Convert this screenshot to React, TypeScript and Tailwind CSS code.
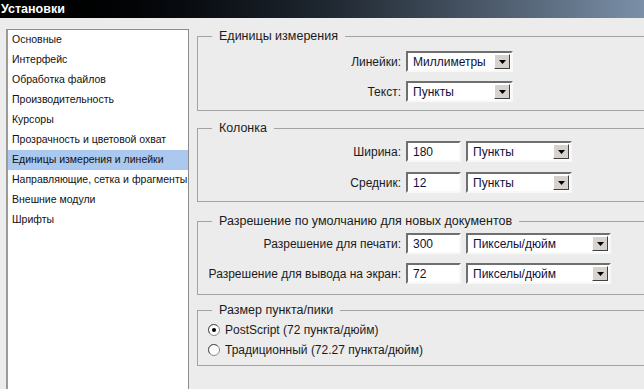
import React from 'react'

const sections = [
  'Основные',
  'Интерфейс',
  'Обработка файлов',
  'Производительность',
  'Курсоры',
  'Прозрачность и цветовой охват',
  'Единицы измерения и линейки',
  'Направляющие, сетка и фрагменты',
  'Внешние модули',
  'Шрифты',
]

const font = { fontFamily: '"Liberation Sans", Arial, sans-serif' }

function Arrow() {
  return (
    <div className="w-[16px] h-[15px] bg-[#d6d3ce] border border-t-white border-l-white border-b-[#404040] border-r-[#404040] flex items-center justify-center">
      <svg width="7" height="4" viewBox="0 0 7 4">
        <path d="M0 0h7L3.5 4z" fill="#000" />
      </svg>
    </div>
  )
}

function Select({ value, width }: { value: string; width: string }) {
  return (
    <div
      className={`${width} h-[21px] bg-white border-2 border-t-[#6f6f6f] border-l-[#6f6f6f] border-b-[#f8f8f8] border-r-[#f8f8f8] flex items-center justify-between pl-[5px] pr-[1px]`}
    >
      <span className="text-[12px] text-[#10103a] leading-none">{value}</span>
      <Arrow />
    </div>
  )
}

function Input({ value }: { value: string }) {
  return (
    <div className="w-[55px] h-[21px] bg-white border-2 border-t-[#6f6f6f] border-l-[#6f6f6f] border-b-[#f8f8f8] border-r-[#f8f8f8] flex items-center pl-[5px]">
      <span className="text-[12px] text-[#10103a] leading-none">{value}</span>
    </div>
  )
}

function Label({ children }: { children: React.ReactNode }) {
  return <div className="w-[204px] text-right text-[12px] text-[#1b1b1b] pr-[1px]">{children}</div>
}

function Group({
  title,
  className,
  children,
}: {
  title: string
  className: string
  children: React.ReactNode
}) {
  return (
    <fieldset className={`w-[470px] border border-[#a3a3a3] ${className}`}>
      <legend className="ml-[14px] px-[7px] text-[12.5px] leading-[14px] text-[#1b1b1b]">{title}</legend>
      {children}
    </fieldset>
  )
}

function Radio({ checked, label }: { checked?: boolean; label: string }) {
  return (
    <div className="flex items-center h-[16px] pl-[10px] gap-[5px]">
      <svg width="12" height="12" viewBox="0 0 12 12">
        <circle cx="6" cy="6" r="5.5" fill="#fff" stroke="#8a8a8a" />
        <path d="M2 9.5A5 5 0 0 1 9.5 2" stroke="#5a5a5a" fill="none" />
        {checked && <circle cx="6" cy="6" r="2" fill="#000" />}
      </svg>
      <span className="text-[12px] text-[#1b1b1b]">{label}</span>
    </div>
  )
}

export default function App() {
  const active = 'Единицы измерения и линейки'

  return (
    <div className="w-[644px] h-[389px] bg-[#ececec] overflow-hidden flex flex-col" style={font}>
      {/* Title bar */}
      <div className="h-[18px] shrink-0 bg-gradient-to-r from-black via-[#1e262f] to-[#7b90a8] flex items-center pl-[1px]">
        <span className="text-white font-bold text-[12.5px] leading-none">Установки</span>
      </div>

      <div className="flex flex-1 pt-[11px] pl-[6px]">
        {/* Sidebar */}
        <div className="w-[183px] h-[380px] shrink-0 bg-white border border-[#8c8c8c] border-l-2 border-l-[#9a9a9a]">
          {sections.map((s) => (
            <div
              key={s}
              className={`h-[20px] flex items-center pl-[4px] text-[10.5px] whitespace-nowrap text-[#111] ${
                s === active ? 'bg-[#abc8ee]' : ''
              }`}
            >
              {s}
            </div>
          ))}
        </div>

        {/* Settings */}
        <div className="ml-[8px] flex flex-col">
          <Group title="Единицы измерения" className="pt-[8px] pb-[8px]">
            <div className="flex flex-col gap-[9px]">
              <div className="flex items-center gap-[4px]">
                <Label>Линейки:</Label>
                <Select value="Миллиметры" width="w-[107px]" />
              </div>
              <div className="flex items-center gap-[4px]">
                <Label>Текст:</Label>
                <Select value="Пункты" width="w-[107px]" />
              </div>
            </div>
          </Group>

          <Group title="Колонка" className="mt-[10px] pt-[6px] pb-[8px]">
            <div className="flex flex-col gap-[10px]">
              <div className="flex items-center gap-[4px]">
                <Label>Ширина:</Label>
                <Input value="180" />
                <div className="ml-[1px]">
                  <Select value="Пункты" width="w-[106px]" />
                </div>
              </div>
              <div className="flex items-center gap-[4px]">
                <Label>Средник:</Label>
                <Input value="12" />
                <div className="ml-[1px]">
                  <Select value="Пункты" width="w-[106px]" />
                </div>
              </div>
            </div>
          </Group>

          <Group title="Разрешение по умолчанию для новых документов" className="mt-[12px] pt-[5px] pb-[10px]">
            <div className="flex flex-col gap-[9px]">
              <div className="flex items-center gap-[4px]">
                <Label>Разрешение для печати:</Label>
                <Input value="300" />
                <div className="ml-[1px]">
                  <Select value="Пикселы/дюйм" width="w-[145px]" />
                </div>
              </div>
              <div className="flex items-center gap-[4px]">
                <Label>Разрешение для вывода на экран:</Label>
                <Input value="72" />
                <div className="ml-[1px]">
                  <Select value="Пикселы/дюйм" width="w-[145px]" />
                </div>
              </div>
            </div>
          </Group>

          <Group title="Размер пункта/пики" className="mt-[8px] pt-[5px] pb-[7px]">
            <div className="flex flex-col gap-[4px]">
              <Radio checked label="PostScript (72 пункта/дюйм)" />
              <Radio label="Традиционный (72.27 пункта/дюйм)" />
            </div>
          </Group>
        </div>
      </div>
    </div>
  )
}
